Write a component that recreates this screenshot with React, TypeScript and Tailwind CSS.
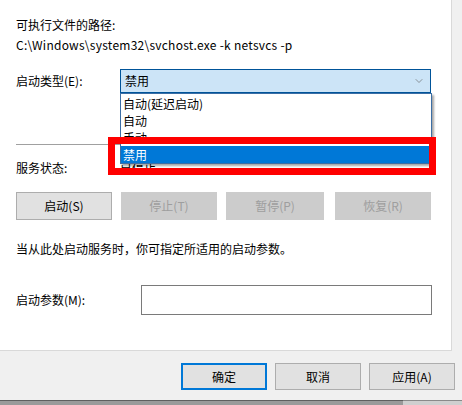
import { ChevronDown } from 'lucide-react';

const font = "font-['Segoe_UI','Noto_Sans_CJK_SC','Noto_Sans',sans-serif]";

interface BtnProps {
    label: string;
    disabled?: boolean;
    className?: string;
}

const ServiceButton = ({ label, disabled, className }: BtnProps) => (
    <div
        className={`h-[28px] flex items-center justify-center border text-[12px] ${
            disabled ? 'bg-[#cccccc] border-[#cccccc] text-[#9e9e9e]' : 'bg-[#e1e1e1] border-[#adadad] text-black'
        } ${className ?? ''}`}
    >
        {label}
    </div>
);

const FooterButton = ({ label, focused }: { label: string; focused?: boolean }) => (
    <div
        className={`h-[27px] w-[86px] flex items-center justify-center bg-[#e1e1e1] text-[12px] text-black ${
            focused ? 'border-2 border-[#0078d7]' : 'border border-[#adadad]'
        }`}
    >
        {label}
    </div>
);

const startupOptions = ['自动(延迟启动)', '自动', '手动', '禁用'];

export default function App() {
    return (
        <div className={`relative w-[462px] h-[405px] overflow-hidden bg-[#f0f0f0] text-black ${font}`}>
            <div className="flex h-[351px]">
                {/* general tab page */}
                <div className="w-[452px] bg-white border-r border-b border-[#d9d9d9] pl-[16px] pt-[17px] text-[12px] leading-[16px]">
                    <div>可执行文件的路径:</div>
                    <div className="mt-[4px] tracking-[0.25px]">C:\Windows\system32\svchost.exe -k netsvcs -p</div>

                    <div className="mt-[16px] flex items-center">
                        <span className="w-[104px]">启动类型(E):</span>
                        <div className="w-[311px] h-[24px] flex items-center justify-between bg-[#cce4f7] border border-[#005499] pl-[4px] pr-[5px]">
                            <span>禁用</span>
                            <ChevronDown className="w-[12px] h-[12px] text-[#606060]" strokeWidth={1.25} />
                        </div>
                    </div>

                    <div className="mt-[51px] mr-[20px] border-t border-[#a0a0a0]" />

                    <div className="mt-[15px] flex">
                        <span className="w-[104px]">服务状态:</span>
                        <span>已停止</span>
                    </div>

                    <div className="mt-[16px] flex">
                        <ServiceButton label="启动(S)" className="w-[96px]" />
                        <ServiceButton label="停止(T)" disabled className="w-[96px] ml-[9px]" />
                        <ServiceButton label="暂停(P)" disabled className="w-[98px] ml-[9px]" />
                        <ServiceButton label="恢复(R)" disabled className="w-[96px] ml-[11px]" />
                    </div>

                    <div className="mt-[21px]">当从此处启动服务时，你可指定所适用的启动参数。</div>

                    <div className="mt-[28px] flex items-center">
                        <span className="w-[125px]">启动参数(M):</span>
                        <div className="w-[291px] h-[30px] border border-[#7a7a7a] bg-white" />
                    </div>
                </div>
                <div className="flex-1 bg-[#f0f0f0]" />
            </div>

            {/* footer */}
            <div className="h-[49px] flex justify-end items-start pt-[12px] pr-[7px] gap-[8px]">
                <FooterButton label="确定" focused />
                <FooterButton label="取消" />
                <FooterButton label="应用(A)" />
            </div>
            <div className="flex h-[5px]">
                <div className="w-[403px] bg-[#9a9a9a] border-t border-[#5f5f5f]" />
                <div className="flex-1 bg-[#cfcfcf] border-t border-[#8a8a8a]" />
            </div>

            {/* open dropdown list */}
            <div className="absolute left-[120px] top-[93px] w-[312px] h-[71px] bg-white border border-[#3b6ea5] pt-[1px] shadow-[2px_2px_2px_rgba(0,0,0,0.35)] text-[12px] leading-[17px]">
                {startupOptions.map((opt, i) => (
                    <div
                        key={opt}
                        className={`h-[17px] pl-[2px] ${i === 3 ? 'bg-[#0078d7] text-white' : ''}`}
                    >
                        {opt}
                    </div>
                ))}
            </div>

            {/* annotation */}
            <div className="absolute left-[108px] top-[137px] w-[328px] h-[38px] border-[7px] border-[#ff0000]" />
        </div>
    );
}
